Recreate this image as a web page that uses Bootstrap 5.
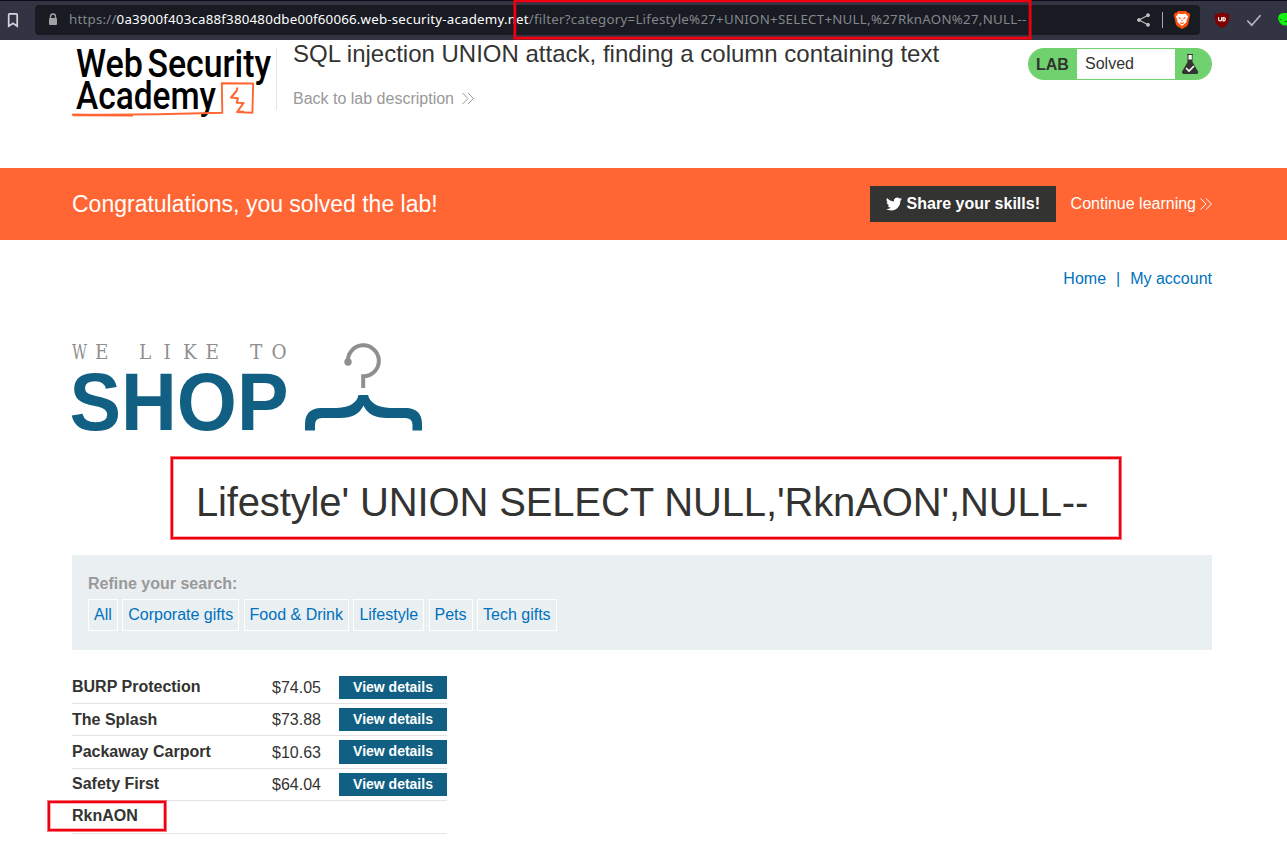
<!DOCTYPE html>
<html lang="en">
<head>
<meta charset="utf-8">
<meta name="viewport" content="width=device-width, initial-scale=1">
<title>SQL injection UNION attack, finding a column containing text</title>
<link href="https://cdn.jsdelivr.net/npm/bootstrap@5.3.0/dist/css/bootstrap.min.css" rel="stylesheet">
<style>
  body { font-family: "Liberation Sans", Arial, sans-serif; font-size: 16px; line-height: 20px; color: #333332; background: #fff; height: 841px; overflow: hidden; }
  a { color: #0071bd; text-decoration: none; }
  svg { display: block; flex: none; overflow: visible; }
  .browser-bar { height: 40px; background: #323443; border-top: 1px solid #0c0b18; padding-top: 4px; }
  .url-box { width: 1165px; height: 30px; margin-left: 15px; background: #181b22; border-radius: 4px; padding-left: 13px; }
  .url-text { font: 13.3px/29px "Noto Sans", sans-serif; color: #85878c; white-space: nowrap; margin-left: 11px; width: 1065px; }
  .url-scheme { letter-spacing: .22px; }
  .url-host { color: #fff; letter-spacing: .2px; }
  .url-path { letter-spacing: .26px; }
  .page-wrap { width: 1140px; margin-left: 72px; }
  .lab-header { height: 128px; }
  .lab-rule { width: 1px; height: 62px; margin-top: 8px; background: #e4e4e4; }
  .lab-title { font-size: 24px; line-height: 28px; }
  .back-link { color: #999; margin-top: 21px; }
  .lab-state { width: 184px; height: 32px; margin-top: 8px; background: #70d26f; border-radius: 16px; padding: 1px 0; }
  .lab-state-text { width: 98px; height: 30px; line-height: 29px; background: #fff; padding-left: 8px; }
  .lab-state b { width: 49px; padding-left: 8px; line-height: 31px; }
  .solved-banner { height: 72px; background: #ff6633; color: #fff; }
  .solved-text { font-size: 23px; }
  .share-btn { width: 186px; height: 36px; background: #333332; color: #fff; font-weight: 700; padding-left: 16px; gap: 5px; margin-right: 15px; }
  .top-links { height: 20px; margin-top: 29px; gap: 10px; }
  .shop-logo { margin-top: 43px; }
  .shop-title { font-size: 40px; line-height: 48px; height: 94px; padding-top: 17px; margin-top: 29px; letter-spacing: -.13px; }
  .filters { height: 95px; background: #eaeff2; padding: 19px 16px 0; color: #999; }
  .filter-list { gap: 4.45px; margin-top: 5px; }
  .filters a { height: 32px; line-height: 29px; border: 1px solid #fff; padding: 0 5px; }
  .products { width: 375px; margin-top: 21.6px; }
  .product-row { height: 32.4px; border-bottom: 1px solid #e4e4e4; }
  .product-row:last-child { padding-bottom: 2px; }
  .product-name { width: 200px; font-weight: 700; }
  .product-price { width: 67px; padding-top: 1px; }
  .details-btn { width: 108px; height: 23.4px; background: #115f83; color: #fff; font: 700 14px/22px "Liberation Sans", sans-serif; }
  .marker { position: absolute; border: 2px solid #ee0010; box-shadow: 0 0 0 1px rgba(238, 0, 16, .55), inset 0 0 0 1px rgba(238, 0, 16, .3); pointer-events: none; }
</style>
</head>
<body class="position-relative">
<header class="browser-bar d-flex">
  <svg width="20" height="30" viewBox="0 0 20 30" fill="none" stroke="#d5d5da" stroke-width="1.7"><path d="M9.600 8.900h6.600a1 1 0 0 1 1 1v11.300l-4.200-2.900-4.300 2.900V9.900a1 1 0 0 1 .9-1z"/></svg>
  <div class="url-box d-flex">
    <svg width="10" height="30" viewBox="0 0 10 30"><path d="M2.500 13V11.500a2.500 2.500 0 0 1 5 0V13" fill="none" stroke="#a0a1a6" stroke-width="1.400"/><rect x="1" y="13" width="8" height="7" rx="1" fill="#a0a1a6"/></svg>
    <div class="url-text"><span class="url-scheme">https://</span><span class="url-host">0a3900f403ca88f380480dbe00f60066.web-security-academy.net</span><span class="url-path">/filter?category=Lifestyle%27+UNION+SELECT+NULL,%27RknAON%27,NULL--</span></div>
    <svg width="63" height="30" viewBox="0 0 63 30">
      <g fill="#b9babd" stroke="#b9babd"><path d="M14 10.200L5 15l9 4.800" fill="none" stroke-width="1.200"/><circle cx="14" cy="10.200" r="1.500"/><circle cx="5" cy="15" r="1.500"/><circle cx="14" cy="19.800" r="1.500"/></g>
      <path d="M28.500 7v16" stroke="#a6a7ab"/>
      <path d="M44 6h8l1.500 1.800 1.500-.1 1.200 2.300-.5 1.800-1.500 7.200q-.4 1.500-1.700 2.400L48 24l-4.500-2.600q-1.300-.9-1.700-2.400l-1.500-7.200-.5-1.800L41 7.700l1.500.1z" fill="#fb4f09"/>
      <path d="M44.500 8.500l3.500.7 3.500-.7 2.500 3-1.500 4 .2 1.500L48 21l-4.700-4 .2-1.500-1.500-4z" fill="#fff"/>
      <path d="M44 12l2.800.8-.7 1.700zm8 0l-2.800.8.7 1.700zM48 13l.6 3.200h-1.200zM45.700 17l2.300 1.100 2.300-1.100-.8 1.400-1.500.9-1.500-.9z" fill="#fb4f09"/>
    </svg>
  </div>
  <svg width="87" height="30" viewBox="0 0 87 30">
    <path d="M22 7.200c2.500 1.200 4.500 1.500 7 1.500v6c0 4-3 6.300-7 8.300-4-2-7-4.300-7-8.300v-6c2.500 0 4.500-.3 7-1.500z" fill="#800000"/>
    <path d="M18.600 12.200v2.200a1.500 1.500 0 0 0 3 0v-2.200M23.100 12.600v3.200h.6a1.600 1.600 0 0 0 0-3.200z" fill="none" stroke="#fff" stroke-width="1.200"/>
    <path d="M47.300 15.500l4.400 4.700 8.800-10" fill="none" stroke="#b5b6bb" stroke-width="1.700"/>
    <path d="M87 8c-5-.5-8.500 1-8.600 4-.5 1-.6 3 .5 3.800C80 19.500 83 21 87 20.500z" fill="#12f20f"/><path d="M79.500 14.500h2M84.500 16.500h2.500" stroke="#136a13"/>
  </svg>
</header>

<main>
  <section class="page-wrap lab-header d-flex">
    <svg width="204" height="80" viewBox="0 0 204 80" role="img" aria-label="Web Security Academy">
      <g font-family="Roboto, sans-serif" font-weight="500" font-size="38" fill="#000">
        <text x="4" y="37" textLength="67" lengthAdjust="spacingAndGlyphs">Web</text>
        <text x="75.500" y="37" textLength="123.500" lengthAdjust="spacingAndGlyphs">Security</text>
        <text x="4" y="69" textLength="140" lengthAdjust="spacingAndGlyphs">Academy</text>
      </g>
      <g fill="none" stroke="#ff6633" stroke-linejoin="round">
        <path d="M0 74.800Q75 75.200 150.300 72.800L149.800 43.300l31.400.2-.8 29.200-16-.6" stroke-width="1.900"/>
        <path d="M1 75l60 .3" stroke-width="2.400"/>
        <path d="M165.500 47.500l-1 3.500-5.500 6.500 6.800.8-1 4.500 6.700.2-6 8.500 6.500.2" stroke-width="2.100"/>
      </g>
    </svg>
    <div class="lab-rule"></div>
    <div class="flex-grow-1 ps-3">
      <div class="lab-title">SQL injection UNION attack, finding a column containing text</div>
      <a href="#" class="back-link d-flex align-items-center gap-2">Back to lab description <svg width="12" height="14" viewBox="0 0 12 14" fill="none" stroke="#999"><path d="M.5 1L6 6.500.5 12M6 1l5.500 5.500L6 12"/></svg></a>
    </div>
    <div class="lab-state d-flex">
      <b>LAB</b><div class="lab-state-text">Solved</div>
      <svg width="37" height="30" viewBox="0 0 37 30"><path d="M12.500 6h5v7l5.500 9.500q.6 2.500-1.500 2.500h-13q-2-.2-1.400-2.500L12.500 13z" fill="#333332"/><path d="M13.500 5.500h3.300v5h-3.300z" fill="#fff"/><path d="M12 5.500h6" stroke="#333332"/><path d="M11 19l3 3 5-5" fill="none" stroke="#fff" stroke-width="1.600"/></svg>
    </div>
  </section>

  <section class="solved-banner">
    <div class="page-wrap h-100 d-flex align-items-center">
      <div class="solved-text me-auto">Congratulations, you solved the lab!</div>
      <a href="#" class="share-btn d-flex align-items-center"><svg width="16" height="16" viewBox="0 0 24 24" fill="#fff"><path d="M23.950 4.570a10 10 0 0 1-2.820.770 4.950 4.950 0 0 0 2.160-2.720c-.95.550-2 .950-3.130 1.180a4.920 4.920 0 0 0-8.380 4.480C7.690 8.090 4.070 6.130 1.640 3.160a4.920 4.920 0 0 0 1.520 6.570 4.900 4.900 0 0 1-2.230-.610v.060a4.920 4.920 0 0 0 3.950 4.830 5 5 0 0 1-2.210.080 4.940 4.940 0 0 0 4.600 3.420A9.870 9.870 0 0 1 0 19.540a14 14 0 0 0 7.550 2.210c9.050 0 14-7.500 14-13.990 0-.210 0-.420-.010-.630a10 10 0 0 0 2.410-2.560z"/></svg>Share your skills!</a>
      <a href="#" class="text-white d-flex align-items-center gap-1">Continue learning <svg width="12" height="14" viewBox="0 0 12 14" fill="none" stroke="#fff"><path d="M.5 1.500L6 7 .5 12.500M6 1.500L11.500 7 6 12.500"/></svg></a>
    </div>
  </section>

  <div class="page-wrap">
    <nav class="top-links d-flex justify-content-end"><a href="#">Home</a><span style="color:#0071bd">|</span><a href="#">My account</a></nav>
    <svg class="shop-logo" width="352" height="100" viewBox="0 0 352 100" role="img" aria-label="We like to shop">
      <g fill="#8f8f8f" font-family="'DejaVu Serif Condensed','DejaVu Serif',serif" font-size="20.500">
        <text y="27" x="0" textLength="15" lengthAdjust="spacingAndGlyphs">W</text><text y="27" x="23">E</text>
        <text y="27" x="67 91.500 111 133.500">LIKE</text>
        <text y="27" x="178 199.500">TO</text>
      </g>
      <text fill="#115f83" font-family="Liberation Sans, sans-serif" font-weight="700" font-size="81" x="-2.500" y="98" textLength="219" lengthAdjust="spacingAndGlyphs">SHOP</text>
      <path d="M276 31a15.500 15.500 0 1 1 15.200 13.300V56" fill="none" stroke="#8f8f8f" stroke-width="4"/>
      <circle cx="276" cy="30" r="3.700" fill="#8f8f8f"/>
      <path d="M233 98.500V92Q233 76.500 249 76H265Q284 75 286.500 63H296Q299 75 318 76H334Q350 76.500 350 92V98.500H340.500V93Q340.500 86 333 86H315Q297 86 291.500 73.500Q286 86 268 86H250Q243 86 243 93V98.500z" fill="#115f83"/>
    </svg>
    <h1 class="shop-title text-center fw-normal mb-0">Lifestyle' UNION SELECT NULL,'RknAON',NULL--</h1>
    <section class="filters">
      <div class="fw-bold">Refine your search:</div>
      <div class="filter-list d-flex"><a href="#">All</a><a href="#">Corporate gifts</a><a href="#">Food &amp; Drink</a><a href="#">Lifestyle</a><a href="#">Pets</a><a href="#">Tech gifts</a></div>
    </section>
    <section class="products">
      <div class="product-row d-flex align-items-center"><div class="product-name">BURP Protection</div><div class="product-price">$74.05</div><a href="#" class="details-btn text-center">View details</a></div>
      <div class="product-row d-flex align-items-center"><div class="product-name">The Splash</div><div class="product-price">$73.88</div><a href="#" class="details-btn text-center">View details</a></div>
      <div class="product-row d-flex align-items-center"><div class="product-name">Packaway Carport</div><div class="product-price">$10.63</div><a href="#" class="details-btn text-center">View details</a></div>
      <div class="product-row d-flex align-items-center"><div class="product-name">Safety First</div><div class="product-price">$64.04</div><a href="#" class="details-btn text-center">View details</a></div>
      <div class="product-row d-flex align-items-center"><div class="product-name">RknAON</div></div>
    </section>
  </div>
</main>

<div class="marker" style="left:514px;top:0;width:517px;height:39px"></div>
<div class="marker" style="left:171px;top:457px;width:950px;height:82px"></div>
<div class="marker" style="left:48px;top:801px;width:118px;height:30px"></div>
<script src="https://cdn.jsdelivr.net/npm/bootstrap@5.3.0/dist/js/bootstrap.bundle.min.js"></script>
</body>
</html>
